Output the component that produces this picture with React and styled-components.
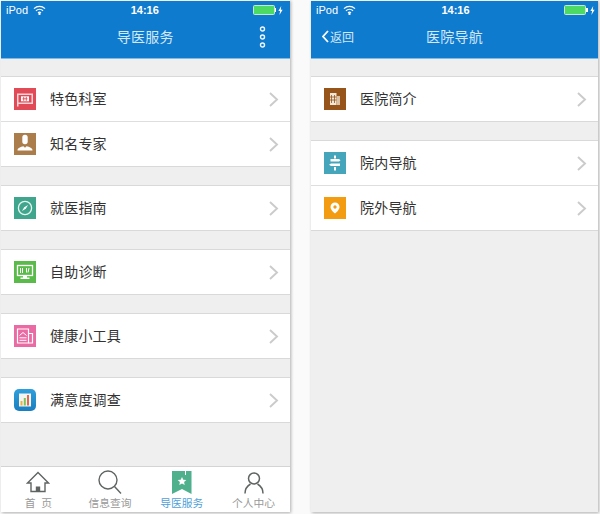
import React from 'react';
import styled, { createGlobalStyle } from 'styled-components';

const GlobalStyle = createGlobalStyle`
  html, body {
    margin: 0;
    padding: 0;
    background: #fafafa;
  }
  body {
    font-family: "Liberation Sans", "Noto Sans CJK SC", sans-serif;
  }
`;

const WifiIcon = () => (
  <svg width="13" height="10" viewBox="0 0 13 10" fill="none" stroke="#fff" strokeWidth="1.3">
    <path d="M1 3.6C4.2.6 8.8.6 12 3.6" />
    <path d="M3 5.700c2-1.800 5-1.800 7 0" />
    <path d="M5 7.700c.9-.7 2.100-.7 3 0" />
    <circle cx="6.500" cy="8.900" r=".5" fill="#fff" />
  </svg>
);

const Battery = () => (
  <BatteryWrap>
    <BatteryBody />
    <BatteryTip />
    <svg width="5" height="9" viewBox="0 0 5 9">
      <path d="M3.200 0 .4 5h1.700L1.400 9l3.200-5.300H2.800z" fill="#fff" />
    </svg>
  </BatteryWrap>
);

const StatusRow = ({ narrow }) => (
  <StatusBar $narrow={narrow}>
    <StatusLeft>
      iPod <WifiIcon />
    </StatusLeft>
    <StatusTime>14:16</StatusTime>
    <Battery />
  </StatusBar>
);

const Chevron = () => (
  <ChevronWrap width="10" height="15" viewBox="0 0 10 15" fill="none" stroke="#cbcbcb" strokeWidth="1.900">
    <path d="M1 1l7 6.500L1 14" />
  </ChevronWrap>
);

const Flag = () => (
  <svg width="22" height="22" viewBox="0 0 22 22">
    <rect width="22" height="22" fill="#e14b57" />
    <path d="M3 5.500h16v10.500H4.500v2.500H3z" fill="#f7d5d8" />
    <rect x="4.500" y="7" width="13" height="7.500" fill="#e14b57" />
    <rect x="7" y="8.300" width="8" height="5" fill="#fff" />
    <path d="M9.700 8.800v4M12.300 8.800v4M8.500 10.800h5" stroke="#e14b57" strokeWidth=".9" />
  </svg>
);

const Doctor = () => (
  <svg width="22" height="22" viewBox="0 0 22 22">
    <rect width="22" height="22" fill="#aa7d4b" />
    <path d="M8.300 4.500a2.700 2.700 0 0 1 5.400 0v4a2.700 2.700 0 0 1-5.400 0z" fill="#fff" />
    <path d="M3.500 17.500c0-2.500 3-3.500 6-4.200l1.500 1.500 1.500-1.500c3 .7 6 1.700 6 4.200z" fill="#fff" />
  </svg>
);

const Compass = () => (
  <svg width="22" height="22" viewBox="0 0 22 22">
    <rect width="22" height="22" fill="#3fa58c" />
    <circle cx="11" cy="11" r="6.600" fill="none" stroke="#e6f5f0" strokeWidth="1.300" />
    <path d="M14 8 11.800 11.800 8 14l2.200-3.800z" fill="#fff" />
  </svg>
);

const Monitor = () => (
  <svg width="22" height="22" viewBox="0 0 22 22">
    <rect width="22" height="22" fill="#5abb4b" />
    <rect x="3.500" y="4.500" width="15" height="10" fill="none" stroke="#fff" strokeWidth="1.300" />
    <path d="M6.500 7v5M8.500 7v5M12.500 7v4.500M15 7l-1 4.500" stroke="#fff" fill="none" strokeWidth="1" />
    <path d="M9 15h4v1.500h2.500V18h-9v-1.500H9z" fill="#fff" />
  </svg>
);

const Tool = () => (
  <svg width="22" height="22" viewBox="0 0 22 22">
    <rect width="22" height="22" fill="#ea6aa3" />
    <path d="M3.500 4h11v14h-11z" fill="none" stroke="#fff" strokeWidth="1.200" />
    <path d="M14.500 8.500h4V18h-4" fill="none" stroke="#fff" strokeWidth="1.200" />
    <path d="M5.500 10.500 9 7.500l3.500 3" fill="none" stroke="#fff" strokeWidth="1" />
    <path d="M5.500 12.800h7M5.500 15.300h7" stroke="#fff" strokeWidth="1" />
  </svg>
);

const Survey = () => (
  <svg width="22" height="22" viewBox="0 0 22 22">
    <defs>
      <linearGradient id="surveyBg" x1="0" y1="0" x2="0" y2="1">
        <stop offset="0" stopColor="#2f9fdc" />
        <stop offset="1" stopColor="#1a7fc0" />
      </linearGradient>
    </defs>
    <rect width="22" height="22" rx="5" fill="url(#surveyBg)" />
    <rect x="5" y="4.500" width="12" height="13" fill="#f4f4f0" />
    <rect x="6.500" y="12" width="2" height="4.500" fill="#f2b13c" />
    <rect x="9.800" y="9" width="2" height="7.500" fill="#7cc35c" />
    <rect x="13" y="6" width="2" height="10.500" fill="#e8674f" />
  </svg>
);

const Building = () => (
  <svg width="22" height="22" viewBox="0 0 22 22">
    <rect width="22" height="22" fill="#96531a" />
    <rect x="6" y="5" width="6.500" height="12" fill="#f2e6d8" />
    <rect x="12.500" y="8" width="3.500" height="9" fill="#d9c2a8" />
    <path d="M7.500 7v8M10.500 7v8M6 9h6.500M6 12h6.500" stroke="#96531a" strokeWidth=".8" />
  </svg>
);

const Signpost = () => (
  <svg width="22" height="22" viewBox="0 0 22 22">
    <rect width="22" height="22" fill="#45a5ba" />
    <path d="M10 3.500h2v3h-2zM10 15h2v3.500h-2z" fill="#fff" />
    <path d="M6.500 7H15l1.500 1.300L15 9.600H6.500zM16 11.500H7L5 12.800l2 1.300h9z" fill="#fff" />
  </svg>
);

const Pin = () => (
  <svg width="22" height="22" viewBox="0 0 22 22">
    <rect width="22" height="22" fill="#f39c12" />
    <path d="M11 5.500a4.500 4.500 0 0 1 4.500 4.500c0 3-4.500 6.500-4.500 6.500S6.500 13 6.500 10A4.500 4.500 0 0 1 11 5.500z" fill="#fff" />
    <circle cx="11" cy="10" r="1.700" fill="#f39c12" />
  </svg>
);

const Row = ({ icon, label, divided }) => (
  <RowItem $divided={divided}>
    <IconSlot>{icon}</IconSlot>
    <RowLabel>{label}</RowLabel>
    <Chevron />
  </RowItem>
);

const tabs = [
  {
    label: '首  页',
    icon: (
      <svg width="24" height="24" viewBox="0 0 24 24" fill="none" stroke="#5f6463" strokeWidth="1.400">
        <path d="M1.500 13 12 2.500 22.500 13h-3.500v8.500H5V13z" />
        <rect x="9.800" y="16.500" width="4.400" height="5" fill="#5f6463" stroke="none" />
      </svg>
    ),
  },
  {
    label: '信息查询',
    icon: (
      <svg width="24" height="24" viewBox="0 0 24 24" fill="none" stroke="#5f6463" strokeWidth="1.400">
        <circle cx="10" cy="10" r="9" />
        <path d="M16.500 16.500 23 23.500" />
      </svg>
    ),
  },
  {
    label: '导医服务',
    active: true,
    icon: (
      <svg width="20" height="24" viewBox="0 0 20 24">
        <path d="M0 1h13v4h1V1h5.500v23L10 19l-10 5z" fill="#4fb08e" />
        <path d="m10 7 1.300 2.700 3 .4-2.200 2 .6 3L10 13.600 7.300 15.100l.6-3-2.200-2 3-.4z" fill="#fff" />
      </svg>
    ),
  },
  {
    label: '个人中心',
    icon: (
      <svg width="20" height="22" viewBox="0 0 20 22" fill="none" stroke="#5f6463" strokeWidth="1.500">
        <ellipse cx="10" cy="6.500" rx="5.500" ry="5.500" />
        <path d="M1 21.500c0-5 3-8 5.500-9.500M19 21.500c0-5-3-8-5.500-9.500" />
      </svg>
    ),
  },
];

const App = () => (
  <>
    <GlobalStyle />
    <Page>
      <Phone>
        <Header>
          <StatusRow />
          <NavBar>
            <NavTitle>导医服务</NavTitle>
            <MoreDots width="7" height="22" viewBox="0 0 7 22" fill="none" stroke="#f2f8fc" strokeWidth="1.400">
              <circle cx="3.500" cy="3" r="2" />
              <circle cx="3.500" cy="11" r="2" />
              <circle cx="3.500" cy="19" r="2" />
            </MoreDots>
          </NavBar>
        </Header>
        <Content>
          <Group>
            <Row icon={<Flag />} label="特色科室" divided />
            <Row icon={<Doctor />} label="知名专家" />
          </Group>
          <Group>
            <Row icon={<Compass />} label="就医指南" />
          </Group>
          <Group>
            <Row icon={<Monitor />} label="自助诊断" />
          </Group>
          <Group>
            <Row icon={<Tool />} label="健康小工具" />
          </Group>
          <Group>
            <Row icon={<Survey />} label="满意度调查" />
          </Group>
        </Content>
        <TabBar>
          {tabs.map((t) => (
            <Tab key={t.label}>
              <TabIcon>{t.icon}</TabIcon>
              <TabLabel $active={t.active}>{t.label}</TabLabel>
            </Tab>
          ))}
        </TabBar>
      </Phone>
      <Phone $narrow>
        <Header>
          <StatusRow narrow />
          <NavBar>
            <BackLink>
              <svg width="7" height="13" viewBox="0 0 7 13" fill="none" stroke="#fff" strokeWidth="1.800">
                <path d="M6 1 1 6.500 6 12" />
              </svg>
              返回
            </BackLink>
            <NavTitle>医院导航</NavTitle>
          </NavBar>
        </Header>
        <Content>
          <Group>
            <Row icon={<Building />} label="医院简介" />
          </Group>
          <Group>
            <Row icon={<Signpost />} label="院内导航" divided />
            <Row icon={<Pin />} label="院外导航" />
          </Group>
        </Content>
      </Phone>
    </Page>
  </>
);

export default App;

const Page = styled.div`
  display: flex;
  justify-content: space-between;
  width: 600px;
  height: 514px;
  overflow: hidden;
  padding: 0 2px 0 1px;
  box-sizing: border-box;
`;

const Phone = styled.div`
  display: flex;
  flex-direction: column;
  width: ${(p) => (p.$narrow ? '287px' : '288.5px')};
  height: 512px;
  background: #efefef;
  box-shadow: 1px 1px 3px rgba(0, 0, 0, 0.3);
`;

const Header = styled.div`
  height: 57px;
  margin-top: 1px;
  background: #0f7bcf;
  border-bottom: 1px solid #7dbbe8;
  color: #fff;
`;

const StatusBar = styled.div`
  display: flex;
  align-items: center;
  justify-content: space-between;
  height: 18px;
  padding: 0 ${(p) => (p.$narrow ? '3px' : '6px')} 0 5px;
  font-size: 11px;
`;

const StatusLeft = styled.div`
  display: flex;
  align-items: center;
  gap: 5px;
  width: 80px;
`;

const StatusTime = styled.div`
  font-weight: bold;
  font-size: 11px;
`;

const BatteryWrap = styled.div`
  display: flex;
  align-items: center;
  justify-content: flex-end;
  width: 80px;
`;

const BatteryBody = styled.div`
  width: 20px;
  height: 8px;
  background: #4cd964;
  border-radius: 1.5px;
  border: 0.5px solid #c4e8d0;
`;

const BatteryTip = styled.div`
  width: 1.5px;
  height: 4px;
  margin-right: 2px;
  background: #fff;
`;

const NavBar = styled.div`
  position: relative;
  display: flex;
  align-items: center;
  justify-content: center;
  height: 33px;
  padding-bottom: 6px;
`;

const NavTitle = styled.div`
  font-size: 14px;
  letter-spacing: 0.2px;
  color: #d4e8f7;
`;

const MoreDots = styled.svg`
  position: absolute;
  right: 24px;
  top: 7px;
`;

const BackLink = styled.div`
  position: absolute;
  left: 11px;
  top: 9px;
  display: flex;
  align-items: center;
  gap: 1px;
  font-size: 12px;
  color: #d4e8f7;
`;

const Content = styled.div`
  flex: 1;
  display: flex;
  flex-direction: column;
  gap: 18px;
  padding-top: 17px;
`;

const Group = styled.div`
  display: flex;
  flex-direction: column;
  background: #fff;
  border-top: 1px solid #d9d9d9;
  border-bottom: 1px solid #d9d9d9;
`;

const RowItem = styled.div`
  display: flex;
  align-items: center;
  height: 44px;
  padding: 0 11px 0 13px;
  border-bottom: ${(p) => (p.$divided ? '1px solid #dedede' : 'none')};
`;

const IconSlot = styled.div`
  display: flex;
  width: 22px;
  height: 22px;
  margin-right: 14px;
`;

const RowLabel = styled.div`
  flex: 1;
  padding-bottom: 2px;
  font-size: 14px;
  letter-spacing: 0.2px;
  color: #333;
`;

const ChevronWrap = styled.svg`
  flex: none;
`;

const TabBar = styled.div`
  display: grid;
  grid-template-columns: repeat(4, 1fr);
  height: 45px;
  padding-left: 1.5px;
  background: #fff;
  border-top: 1px solid #d4d4d4;
`;

const Tab = styled.div`
  display: flex;
  flex-direction: column;
  align-items: center;
`;

const TabIcon = styled.div`
  display: flex;
  align-items: flex-end;
  height: 27px;
`;

const TabLabel = styled.div`
  margin-top: 1px;
  font-size: 10.75px;
  white-space: pre;
  color: ${(p) => (p.$active ? '#4f9fd8' : '#999')};
`;
